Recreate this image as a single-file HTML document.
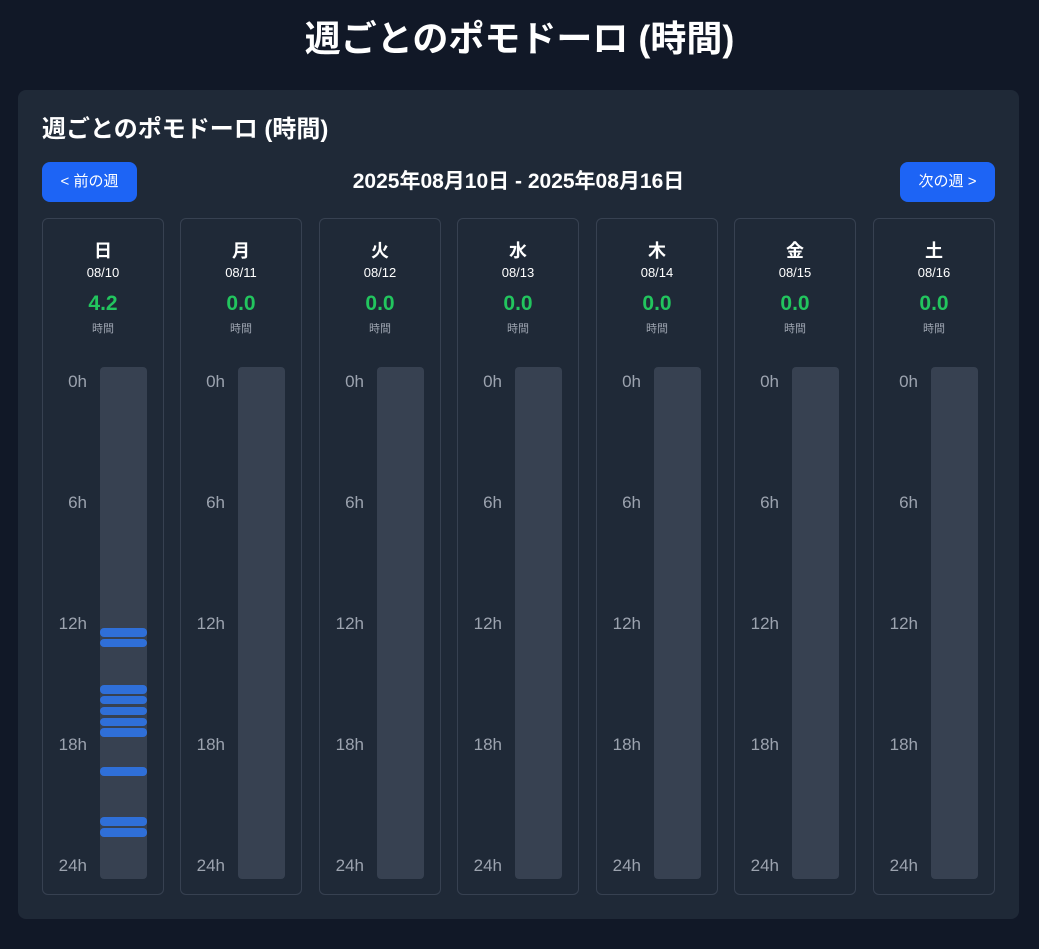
<!DOCTYPE html><html><head><meta charset="utf-8"><style>
body{margin:0;background:#111827;font-family:"Liberation Sans","Noto Sans CJK JP",sans-serif;width:1039px;height:949px;overflow:hidden;position:relative;color:#fff}
h1{position:absolute;top:14px;left:0;width:1039px;text-align:center;margin:0;font-size:36px;font-weight:bold;line-height:50px}
.card{position:absolute;left:18px;top:90px;width:1001px;height:829px;background:#1f2937;border-radius:8px}
h2{position:absolute;left:24px;top:25px;margin:0;font-size:24px;line-height:30px}
.btn{position:absolute;top:72px;height:40px;background:#1d64f5;border-radius:8px;font-size:15px;line-height:40px;text-align:center}
.range{position:absolute;top:72px;left:0;width:1001px;text-align:center;font-size:21px;font-weight:bold;line-height:40px}
.col{position:absolute;top:128px;width:120px;height:675px;border:1px solid #374151;border-radius:6px}
.d{position:absolute;top:18px;width:100%;text-align:center;font-size:18px;font-weight:bold}
.dt{position:absolute;top:46px;width:100%;text-align:center;font-size:13px}
.v{position:absolute;top:73px;width:100%;text-align:center;font-size:21px;font-weight:bold;color:#22c55e}
.u{position:absolute;top:101px;width:100%;text-align:center;font-size:11px;color:#9ca3af}
.bar{position:absolute;left:57px;top:148px;width:47px;height:512px;background:#374151;border-radius:4px}
.l{position:absolute;right:76px;font-size:17px;color:#9ca3af;line-height:20px}
.s{position:absolute;left:0;width:47px;background:#2f6fd8;border-radius:4px}
</style></head><body>
<h1>週ごとのポモドーロ (時間)</h1>
<div class="card">
<h2>週ごとのポモドーロ (時間)</h2>
<div class="btn" style="left:24px;width:95px">&lt; 前の週</div>
<div class="range">2025年08月10日 - 2025年08月16日</div>
<div class="btn" style="left:882px;width:95px">次の週 &gt;</div>
<div id="cols"></div>
</div>
<script>
var days=[["日","08/10","4.2"],["月","08/11","0.0"],["火","08/12","0.0"],["水","08/13","0.0"],["木","08/14","0.0"],["金","08/15","0.0"],["土","08/16","0.0"]];
var L=[24,162,301,439,578,716,855],segs=[[628,637],[639,647],[685,694],[696,704],[707,715],[718,726],[728,737],[767,776],[817,826],[828,837]];
var h="";days.forEach(function(d,i){h+='<div class="col" style="left:'+L[i]+'px"><div class="d">'+d[0]+'</div><div class="dt">'+d[1]+'</div><div class="v">'+d[2]+'</div><div class="u">時間</div>';
[["0h",153],["6h",274],["12h",395],["18h",516],["24h",637]].forEach(function(x){h+='<div class="l" style="top:'+x[1]+'px">'+x[0]+'</div>'});
h+='<div class="bar">';if(i==0)segs.forEach(function(s){h+='<div class="s" style="top:'+(s[0]-367)+'px;height:'+(s[1]-s[0])+'px"></div>'});h+='</div></div>'});
document.getElementById("cols").innerHTML=h;
</script>
</body></html>
